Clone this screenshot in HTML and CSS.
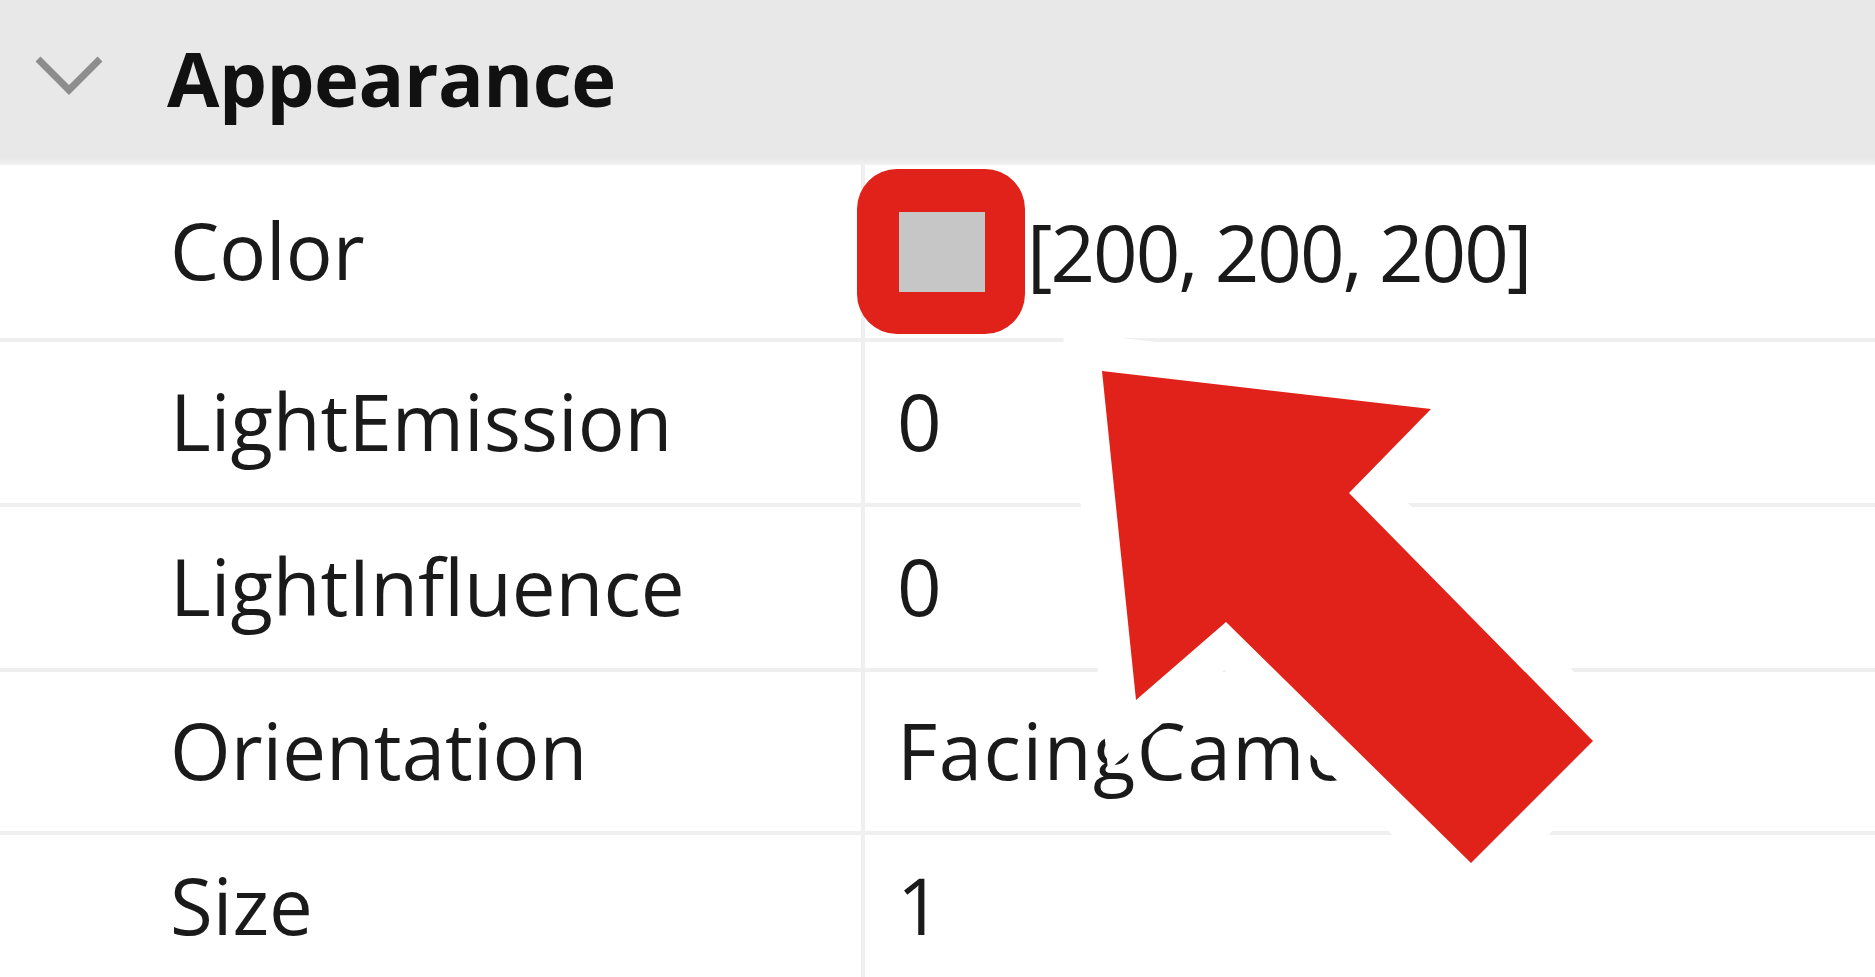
FILE: index.html
```html
<!DOCTYPE html>
<html lang="en">
<head>
<meta charset="utf-8">
<title>Properties - Appearance</title>
<link rel="stylesheet" href="styles.css">
</head>
<body>
<div class="panel">
  <div class="section">
    <svg class="chevron" viewBox="0 0 70 40" width="70" height="40"><polyline points="4,4 35,35 66,4"/></svg>
    <span class="section-title">Appearance</span>
  </div>
  <div class="row row-color">
    <div class="name">Color</div>
    <div class="value"><span class="swatch"></span><span class="color-text">[200, 200, 200]</span></div>
  </div>
  <div class="row">
    <div class="name">LightEmission</div>
    <div class="value">0</div>
  </div>
  <div class="row">
    <div class="name">LightInfluence</div>
    <div class="value">0</div>
  </div>
  <div class="row row-short">
    <div class="name">Orientation</div>
    <div class="value value-wide">FacingCamera</div>
  </div>
  <div class="row row-last">
    <div class="name">Size</div>
    <div class="value">1</div>
  </div>
</div>
<svg class="annotation" viewBox="0 0 1875 977" width="1875" height="977">
  <polygon class="halo" points="1102,371 1431,409 1349,493 1593,741 1471,863 1226,622 1136,700"/>
  <polygon class="arrow" points="1102,371 1431,409 1349,493 1593,741 1471,863 1226,622 1136,700"/>
</svg>
</body>
</html>
```
FILE: styles.css
```css
html, body {
  margin: 0;
  padding: 0;
  background: #ffffff;
}
body {
  width: 1875px;
  height: 977px;
  overflow: hidden;
  position: relative;
  font-family: "Open Sans", "Noto Sans", sans-serif;
  color: #1a1a1a;
}
.panel {
  display: flex;
  flex-direction: column;
}
.section {
  height: 165px;
  background: linear-gradient(#e8e8e8 0, #e8e8e8 158px, #f2f2f2 165px);
  display: flex;
  align-items: center;
  box-sizing: border-box;
  padding-left: 34px;
}
.chevron {
  flex: none;
  margin-top: -16px;
}
.chevron polyline {
  fill: none;
  stroke: #8d8d8d;
  stroke-width: 7;
}
.section-title {
  margin-left: 63px;
  font-weight: 700;
  font-size: 76px;
  letter-spacing: -0.5px;
  color: #111111;
  margin-top: -10px;
}
.row {
  display: grid;
  grid-template-columns: 865px 1fr;
  height: 161px;
  border-bottom: 4px solid #efefef;
}
.row-color {
  height: 173px;
}
.row-short {
  height: 159px;
}
.row-last {
  border-bottom: none;
  height: 142px;
}
.name, .value {
  display: flex;
  align-items: center;
  font-size: 78px;
  white-space: nowrap;
  overflow: hidden;
  padding-bottom: 3px;
}
.name {
  padding-left: 170px;
  border-right: 4px solid #efefef;
}
.value {
  padding-left: 32px;
}
.value-wide {
  letter-spacing: 1.5px;
}
.row-color .value {
  overflow: visible;
  padding-bottom: 0;
}
.swatch {
  position: relative;
  flex: none;
  width: 86px;
  height: 80px;
  margin-left: 2px;
  background: #c6c6c6;
}
.swatch::before {
  content: "";
  position: absolute;
  left: -42px;
  top: -43px;
  right: -40px;
  bottom: -42px;
  border-style: solid;
  border-color: #e0221a;
  border-width: 43px 40px 42px 42px;
  border-radius: 40px;
}
.color-text {
  margin-left: 42px;
  letter-spacing: -2px;
}
.annotation {
  position: absolute;
  left: 0;
  top: 0;
  pointer-events: none;
}
.halo {
  fill: #ffffff;
  stroke: #ffffff;
  stroke-width: 70;
  stroke-linejoin: miter;
  stroke-miterlimit: 10;
}
.arrow {
  fill: #e0221a;
}
```
